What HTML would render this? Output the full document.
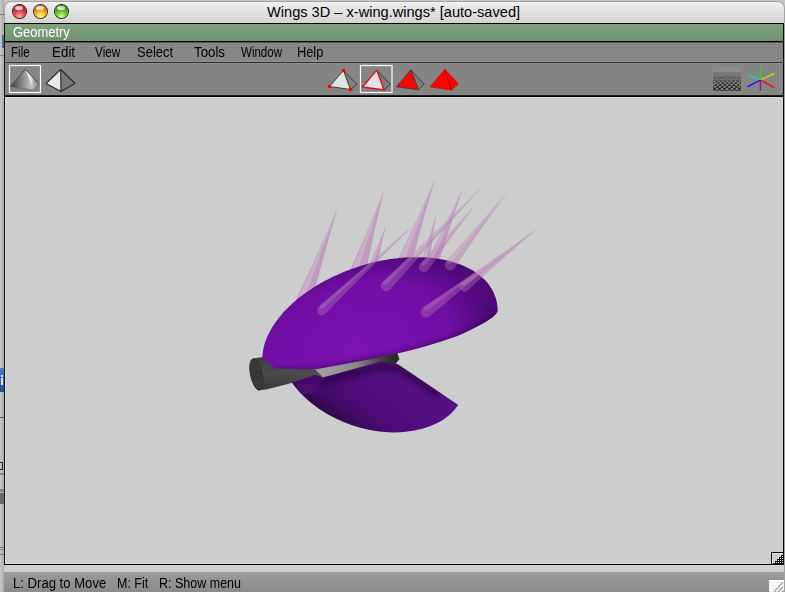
<!DOCTYPE html>
<html><head><meta charset="utf-8">
<style>
html,body{margin:0;padding:0;}
body{width:785px;height:592px;position:relative;overflow:hidden;background:#c4c4c4;font-family:"Liberation Sans",sans-serif;}
.a{position:absolute;}
#desk{left:0;top:0;width:785px;height:592px;background:linear-gradient(90deg,#c6c6c6,#bcbcbc 2px,#a8a8a8 4px,#c8c8c8 4px);}
#title{left:4px;top:1px;width:779px;height:22px;background:linear-gradient(#f0f0f0,#e6e6e6 30%,#d4d4d4);border-radius:7px 7px 0 0;border:1px solid #a4a4a4;border-bottom:none;box-sizing:border-box;width:781px;}
#ttext{left:267px;top:4px;white-space:nowrap;font-size:14.6px;color:#000;}
.tl{width:13px;height:13px;border-radius:50%;top:5px;}
.blk{background:#000;}
#gtext{left:13px;top:23.5px;font-size:14px;color:#fff;transform-origin:0 0;transform:scaleX(0.924);}
.mt{top:43.5px;font-size:14px;color:#000;transform-origin:0 0;}
.st{top:575px;font-size:14px;color:#000;transform-origin:0 0;}
svg{position:absolute;left:0;top:0;}
</style></head><body>
<div id="desk" class="a"></div>
<div id="title" class="a"></div>
<div id="ttext" class="a">Wings 3D – x-wing.wings* [auto-saved]</div>
<div class="a tl" style="left:12.5px;background:radial-gradient(circle at 50% 85%,#ffb0a8 0,#e05050 35%,#b82020 70%,#601010 100%);box-shadow:0 0 0 1px #3a0a0a;"></div>
<div class="a tl" style="left:33.5px;background:radial-gradient(circle at 50% 85%,#fff890 0,#f0c030 35%,#d07010 70%,#804000 100%);box-shadow:0 0 0 1px #4a2a08;"></div>
<div class="a tl" style="left:54.5px;background:radial-gradient(circle at 50% 85%,#d0ff90 0,#78c838 35%,#389818 70%,#1a5008 100%);box-shadow:0 0 0 1px #143808;"></div>
<div class="a" style="left:15px;top:6px;width:8px;height:4px;border-radius:50%;background:rgba(255,255,255,0.75);"></div>
<div class="a" style="left:36px;top:6px;width:8px;height:4px;border-radius:50%;background:rgba(255,255,255,0.75);"></div>
<div class="a" style="left:57px;top:6px;width:8px;height:4px;border-radius:50%;background:rgba(255,255,255,0.75);"></div>
<!-- frame -->
<div class="a blk" style="left:4px;top:23px;width:780px;height:1px;"></div>
<div class="a" style="left:5px;top:24px;width:778px;height:17px;background:linear-gradient(#7ea37e,#6f936f);"></div>
<div class="a blk" style="left:4px;top:24px;width:1px;height:540px;background:#111;"></div>
<div class="a blk" style="left:783px;top:24px;width:1px;height:541px;"></div>
<div class="a blk" style="left:4px;top:41px;width:780px;height:1px;"></div>
<div class="a" style="left:5px;top:42px;width:778px;height:1px;background:#555;"></div>
<div class="a" style="left:5px;top:43px;width:778px;height:18px;background:#878787;"></div>
<div class="a" style="left:5px;top:61px;width:778px;height:1px;background:#8f8f8f;"></div>
<div class="a" style="left:5px;top:62px;width:778px;height:1px;background:#333;"></div>
<div class="a" style="left:5px;top:63px;width:778px;height:1px;background:#8e8e8e;"></div>
<div class="a" style="left:5px;top:64px;width:778px;height:31px;background:#858585;"></div>
<div class="a" style="left:5px;top:95px;width:778px;height:1px;background:#1c1c1c;"></div>
<div class="a blk" style="left:5px;top:96px;width:778px;height:1px;"></div>
<div class="a" style="left:5px;top:97px;width:778px;height:467px;background:#cdcdcd;box-shadow:inset 1px 1px 0 #dcdcdc,inset -1px -1px 0 #dadada;"></div>
<div class="a blk" style="left:4px;top:564px;width:780px;height:1px;"></div>
<div class="a" style="left:4px;top:565px;width:780px;height:7px;background:#d0d0d0;"></div>
<div class="a" style="left:4px;top:572px;width:780px;height:20px;background:linear-gradient(#9c9c9c,#8a8a8a);"></div>
<!-- desktop left strip bits -->
<div class="a" style="left:0;top:14px;width:4px;height:1px;background:#777;"></div>
<div class="a" style="left:2px;top:35px;width:2px;height:13px;background:#4a6a9a;"></div>
<div class="a" style="left:0;top:55px;width:4px;height:1px;background:#888;"></div>
<div class="a" style="left:0;top:368px;width:4px;height:24px;background:linear-gradient(#4a80c0,#1a4a90);"></div>
<div class="a" style="left:1px;top:375px;width:2px;height:2px;background:#e0e8f0;"></div>
<div class="a" style="left:1px;top:378px;width:2px;height:7px;background:#e0e8f0;"></div>
<div class="a" style="left:0;top:417px;width:4px;height:1px;background:#555;"></div>
<div class="a" style="left:0;top:462px;width:2px;height:6px;border:1px solid #223;border-left:none;"></div>
<div class="a" style="left:0;top:473px;width:4px;height:2px;background:#888;"></div>
<div class="a" style="left:0;top:489px;width:4px;height:3px;background:#6a9a6a;"></div>
<div class="a" style="left:0;top:493px;width:4px;height:11px;background:#6a6a6a;"></div>
<div class="a" style="left:0;top:547px;width:4px;height:1px;background:#777;"></div>
<div class="a" style="left:0;top:549px;width:4px;height:1px;background:#888;"></div>
<div class="a" style="left:0;top:554px;width:4px;height:1px;background:#777;"></div>
<!-- resize box -->
<div class="a" style="left:771px;top:552px;width:12px;height:12px;background:#000;"></div>
<div class="a" style="left:772px;top:553px;width:11px;height:11px;background:#cdcdcd;box-shadow:inset 1px 1px 0 #e8e8e8;"></div>
<div class="a" style="left:784px;top:24px;width:1px;height:568px;background:#a0a0a0;"></div>
<!-- grip -->
<div class="a" style="left:769px;top:580px;width:15px;height:12px;background:repeating-linear-gradient(#ffffff 0,#ffffff 2px,#ececec 2px,#ececec 3px);"></div>
<div id="gtext" class="a">Geometry</div>
<div class="a mt" style="left:11px;transform:scaleX(0.832)">File</div>
<div class="a mt" style="left:52px;transform:scaleX(0.957)">Edit</div>
<div class="a mt" style="left:95px;transform:scaleX(0.842)">View</div>
<div class="a mt" style="left:137px;transform:scaleX(0.930)">Select</div>
<div class="a mt" style="left:194px;transform:scaleX(0.947)">Tools</div>
<div class="a mt" style="left:241px;transform:scaleX(0.823)">Window</div>
<div class="a mt" style="left:297px;transform:scaleX(0.911)">Help</div>
<div class="a st" style="left:13px;transform:scaleX(0.936)">L: Drag to Move</div>
<div class="a st" style="left:117px;transform:scaleX(0.89)">M: Fit</div>
<div class="a st" style="left:159px;transform:scaleX(0.893)">R: Show menu</div>
<svg width="785" height="592" viewBox="0 0 785 592">
<defs>
<linearGradient id="i1a" x1="10" y1="0" x2="33" y2="0" gradientUnits="userSpaceOnUse"><stop offset="0" stop-color="#3a3a3a"/><stop offset="0.55" stop-color="#8a8a8a"/><stop offset="1" stop-color="#d0d0d0"/></linearGradient>
<linearGradient id="i1b" x1="31" y1="0" x2="39" y2="0" gradientUnits="userSpaceOnUse"><stop offset="0" stop-color="#e8e8e8"/><stop offset="0.3" stop-color="#b0b0b0"/><stop offset="1" stop-color="#8a8a8a"/></linearGradient>
</defs>
<rect x="9.5" y="65.5" width="31" height="27" fill="none" stroke="#fff" stroke-width="1.2"/>
<path d="M25.4,69.2 L10.2,86.8 L33,90 Z" fill="url(#i1a)"/>
<path d="M25.4,69.2 L33,90 L38.9,84.1 Z" fill="url(#i1b)"/>
<path d="M10.2,86.8 L25.4,69.2 L38.9,84.1" fill="none" stroke="#404040" stroke-width="0.9"/>
<path d="M10.2,86.8 L33,90 L38.9,84.1" fill="none" stroke="#6a6a6a" stroke-width="0.7"/>
<path d="M60.7,69.5 L46,83.5 L61,91.5 Z" fill="#e8e8e8"/>
<path d="M60.7,69.5 L61,91.5 L75,83.5 Z" fill="#787878"/>
<path d="M60.7,69.5 L46,83.5 L61,91.5 L75,83.5 Z M60.7,69.5 L61,91.5" fill="none" stroke="#2a2a2a" stroke-width="1.1" stroke-linejoin="round"/>
<path d="M343.5,70.5 L329.5,86.5 L350.5,89.5 Z" fill="#e2e2e2"/>
<path d="M343.5,70.5 L350.5,89.5 L357,84.5 Z" fill="#808080"/>
<path d="M343.5,70.5 L329.5,86.5 L350.5,89.5 L357,84.5 Z M343.5,70.5 L350.5,89.5" fill="none" stroke="#333" stroke-width="0.9" stroke-linejoin="round"/>
<rect x="341.9" y="68.9" width="3.2" height="3.2" fill="#ff0000"/>
<rect x="327.9" y="84.9" width="3.2" height="3.2" fill="#ff0000"/>
<rect x="348.9" y="87.9" width="3.2" height="3.2" fill="#ff0000"/>
<rect x="360.5" y="65.5" width="31.5" height="27" fill="none" stroke="#fff" stroke-width="1.2"/>
<path d="M376.8,70.2 L362.5,87 L384,90 Z" fill="#e2e2e2"/>
<path d="M376.8,70.2 L384,90 L390.5,84.5 Z" fill="#7c7c7c"/>
<path d="M376.8,70.2 L390.5,84.5 L384,90" fill="none" stroke="#333" stroke-width="0.9" stroke-linejoin="round"/>
<path d="M376.8,70.2 L362.5,87 L384,90 Z" fill="none" stroke="#e01010" stroke-width="1.3" stroke-linejoin="round"/>
<path d="M410.8,69.8 L396.5,86.8 L418.5,89.8 Z" fill="#ff0000"/>
<path d="M410.8,69.8 L418.5,89.8 L424.2,84.2 Z" fill="#7c7c7c"/>
<path d="M410.8,69.8 L396.5,86.8 L418.5,89.8 L424.2,84.2 Z M410.8,69.8 L418.5,89.8" fill="none" stroke="#3a3a3a" stroke-width="0.9" stroke-linejoin="round"/>
<path d="M444.8,69.2 L430,87 L451.5,90 L458.5,84 Z" fill="#ff0000" stroke="#c00" stroke-width="0.6"/>
<path d="M444.8,69.2 L451.5,90" stroke="#b00000" stroke-width="0.9"/>
<clipPath id="cg"><rect x="713" y="67" width="28" height="24"/></clipPath>
<rect x="713" y="67" width="28" height="24" fill="#8c8c8c"/>
<g clip-path="url(#cg)"><path d="M646.35,97.75 L704.42,72.56 L704.08,71.79 L645.87,96.65Z M646.65,97.47 L659.13,72.37 L658.37,71.98 L645.58,96.93Z M652.14,97.75 L707.67,72.56 L707.33,71.79 L651.64,96.65Z M652.45,97.42 L662.39,72.33 L661.61,72.02 L651.33,96.98Z M657.92,97.74 L710.93,72.56 L710.57,71.79 L657.41,96.66Z M658.24,97.37 L665.65,72.30 L664.85,72.05 L657.09,97.03Z M663.71,97.74 L714.19,72.55 L713.81,71.80 L663.18,96.66Z M664.03,97.32 L668.91,72.26 L668.09,72.09 L662.86,97.08Z M669.50,97.73 L717.44,72.55 L717.06,71.80 L668.94,96.67Z M669.82,97.26 L672.17,72.22 L671.33,72.13 L668.63,97.14Z M675.29,97.73 L720.70,72.54 L720.30,71.81 L674.71,96.67Z M675.60,97.20 L675.42,72.18 L674.58,72.18 L674.40,97.20Z M681.08,97.72 L723.96,72.54 L723.54,71.81 L680.48,96.68Z M681.37,97.14 L678.67,72.13 L677.83,72.22 L680.18,97.26Z M686.87,97.71 L727.22,72.53 L726.78,71.82 L686.24,96.69Z M687.14,97.08 L681.91,72.09 L681.09,72.26 L685.97,97.32Z M692.66,97.70 L730.48,72.53 L730.02,71.82 L692.00,96.70Z M692.91,97.03 L685.15,72.05 L684.35,72.30 L691.76,97.37Z M698.46,97.69 L733.74,72.52 L733.26,71.83 L697.76,96.71Z M698.67,96.98 L688.39,72.02 L687.61,72.33 L697.55,97.42Z M704.25,97.68 L737.01,72.51 L736.49,71.84 L703.53,96.72Z M704.42,96.93 L691.63,71.98 L690.87,72.37 L703.35,97.47Z M710.05,97.66 L740.27,72.50 L739.73,71.85 L709.28,96.74Z M710.18,96.89 L694.86,71.96 L694.14,72.39 L709.15,97.51Z M715.85,97.65 L743.53,72.49 L742.97,71.86 L715.04,96.75Z M715.93,96.85 L698.09,71.93 L697.41,72.42 L714.95,97.55Z M721.64,97.63 L746.80,72.47 L746.20,71.88 L720.80,96.77Z M721.69,96.82 L701.33,71.91 L700.67,72.44 L720.76,97.58Z M727.44,97.60 L750.06,72.46 L749.44,71.89 L726.56,96.80Z M727.44,96.80 L704.56,71.89 L703.94,72.46 L726.56,97.60Z M733.24,97.58 L753.33,72.44 L752.67,71.91 L732.31,96.82Z M733.20,96.77 L707.80,71.88 L707.20,72.47 L732.36,97.63Z M739.05,97.55 L756.59,72.42 L755.91,71.93 L738.07,96.85Z M738.96,96.75 L711.03,71.86 L710.47,72.49 L738.15,97.65Z M744.85,97.51 L759.86,72.39 L759.14,71.96 L743.82,96.89Z M744.72,96.74 L714.27,71.85 L713.73,72.50 L743.95,97.66Z M750.65,97.47 L763.13,72.37 L762.37,71.98 L749.58,96.93Z M750.47,96.72 L717.51,71.84 L716.99,72.51 L749.75,97.68Z M756.45,97.42 L766.39,72.33 L765.61,72.02 L755.33,96.98Z M756.24,96.71 L720.74,71.83 L720.26,72.52 L755.54,97.69Z M762.24,97.37 L769.65,72.30 L768.85,72.05 L761.09,97.03Z M762.00,96.70 L723.98,71.82 L723.52,72.53 L761.34,97.70Z M768.03,97.32 L772.91,72.26 L772.09,72.09 L766.86,97.08Z M767.76,96.69 L727.22,71.82 L726.78,72.53 L767.13,97.71Z M773.82,97.26 L776.17,72.22 L775.33,72.13 L772.63,97.14Z M773.52,96.68 L730.46,71.81 L730.04,72.54 L772.92,97.72Z M779.60,97.20 L779.42,72.18 L778.58,72.18 L778.40,97.20Z M779.29,96.67 L733.70,71.81 L733.30,72.54 L778.71,97.73Z M785.37,97.14 L782.67,72.13 L781.83,72.22 L784.18,97.26Z M785.06,96.67 L736.94,71.80 L736.56,72.55 L784.50,97.73Z M791.14,97.08 L785.91,72.09 L785.09,72.26 L789.97,97.32Z M790.82,96.66 L740.19,71.80 L739.81,72.55 L790.29,97.74Z M796.91,97.03 L789.15,72.05 L788.35,72.30 L795.76,97.37Z M796.59,96.66 L743.43,71.79 L743.07,72.56 L796.08,97.74Z M802.67,96.98 L792.39,72.02 L791.61,72.33 L801.55,97.42Z M802.36,96.65 L746.67,71.79 L746.33,72.56 L801.86,97.75Z M808.42,96.93 L795.63,71.98 L794.87,72.37 L807.35,97.47Z M808.13,96.65 L749.92,71.79 L749.58,72.56 L807.65,97.75Z" fill="#262626"/>
<defs><linearGradient id="gfade" x1="0" y1="67" x2="0" y2="91" gradientUnits="userSpaceOnUse"><stop offset="0" stop-color="#8c8c8c" stop-opacity="1"/><stop offset="0.3" stop-color="#8c8c8c" stop-opacity="0.7"/><stop offset="0.6" stop-color="#8c8c8c" stop-opacity="0.3"/><stop offset="0.9" stop-color="#8c8c8c" stop-opacity="0"/></linearGradient></defs>
<rect x="713" y="67" width="28" height="24" fill="url(#gfade)"/></g>
<line x1="760.4" y1="80.0" x2="747.4" y2="74.4" stroke="#20c8c8" stroke-width="1.4"/>
<line x1="760.4" y1="80.0" x2="774.4" y2="73.5" stroke="#d8c810" stroke-width="1.4"/>
<line x1="760.4" y1="80.0" x2="760.4" y2="90.6" stroke="#8a1a8a" stroke-width="1.4"/>
<line x1="760.4" y1="80.0" x2="747.4" y2="86.8" stroke="#1010f0" stroke-width="1.4"/>
<line x1="760.4" y1="80.0" x2="774.4" y2="87.6" stroke="#f01010" stroke-width="1.4"/>
<line x1="760.4" y1="80.0" x2="760.4" y2="67.0" stroke="#20e020" stroke-width="1.4"/>
<defs><pattern id="chk" x="0" y="0" width="2" height="2" patternUnits="userSpaceOnUse"><rect width="2" height="2" fill="#000"/><rect width="1" height="1" fill="#fff"/></pattern></defs>
<path d="M783,553 L783,564 L772,564 Z" fill="url(#chk)"/>
<path d="M772,564 L783,553" stroke="#e8e8e8" stroke-width="0.8"/>
<g stroke="#8a8a8a" stroke-width="1.1"><line x1="774" y1="592" x2="783" y2="582"/><line x1="778" y1="592" x2="783" y2="586.5"/><line x1="782" y1="592" x2="783.5" y2="590.5"/></g>
<defs>
<radialGradient id="gU" cx="0" cy="0" r="128" gradientUnits="userSpaceOnUse" gradientTransform="translate(355,348) rotate(-18) scale(1.08,0.7)"><stop offset="0" stop-color="#7c12b2"/><stop offset="0.7" stop-color="#700ea4"/><stop offset="1" stop-color="#4e0878"/></radialGradient>
<linearGradient id="gL" x1="405" y1="385" x2="365" y2="438" gradientUnits="userSpaceOnUse"><stop offset="0" stop-color="#561082"/><stop offset="0.55" stop-color="#4e0c78"/><stop offset="0.85" stop-color="#420a66"/><stop offset="1" stop-color="#34084e"/></linearGradient>
<linearGradient id="gS" x1="315" y1="372" x2="397" y2="358" gradientUnits="userSpaceOnUse"><stop offset="0" stop-color="#a4a4a4"/><stop offset="0.5" stop-color="#8a8a8a"/><stop offset="0.78" stop-color="#484848"/><stop offset="1" stop-color="#222"/></linearGradient>
<linearGradient id="gR" x1="0" y1="357" x2="0" y2="390" gradientUnits="userSpaceOnUse"><stop offset="0" stop-color="#3c3c3c"/><stop offset="0.5" stop-color="#4c4c4c"/><stop offset="1" stop-color="#383838"/></linearGradient>
<clipPath id="cL"><path d="M270,386 L289,378 L322,372 L381,356 L398.6,364.8 L487.7,424.8 L487,470 L270,470 Z"/></clipPath>
</defs>
<path d="M338.0,207.0 Q322.4,259.8 311.3,303.7 A7.8,7.8 0 0 1 296.7,298.3 Q316.2,257.6 338.0,207.0Z" fill="#b070b0" fill-opacity="0.50"/>
<path d="M338.0,207.0 Q316.7,257.7 297.8,298.7 L303.3,300.7 Z" fill="#ffffff" fill-opacity="0.18"/>
<path d="M384.0,190.0 Q372.9,236.1 365.6,274.4 A8.0,8.0 0 0 1 350.4,269.6 Q366.5,234.1 384.0,190.0Z" fill="#b070b0" fill-opacity="0.50"/>
<path d="M384.0,190.0 Q367.0,234.2 351.5,269.9 L357.2,271.8 Z" fill="#ffffff" fill-opacity="0.18"/>
<path d="M386.0,225.0 Q380.5,248.1 376.8,267.2 A4.0,4.0 0 0 1 369.2,264.8 Q377.2,247.0 386.0,225.0Z" fill="#b070b0" fill-opacity="0.50"/>
<path d="M386.0,225.0 Q377.5,247.1 369.8,265.0 L372.6,265.9 Z" fill="#ffffff" fill-opacity="0.18"/>
<path d="M435.0,179.0 Q420.9,226.8 411.0,266.6 A7.5,7.5 0 0 1 397.0,261.4 Q415.0,224.7 435.0,179.0Z" fill="#b070b0" fill-opacity="0.50"/>
<path d="M435.0,179.0 Q415.4,224.8 398.0,261.8 L403.3,263.7 Z" fill="#ffffff" fill-opacity="0.18"/>
<path d="M463.0,188.0 Q448.3,230.8 437.6,266.3 A6.0,6.0 0 0 1 426.4,261.7 Q443.6,228.8 463.0,188.0Z" fill="#b070b0" fill-opacity="0.50"/>
<path d="M463.0,188.0 Q443.9,229.0 427.3,262.1 L431.4,263.8 Z" fill="#ffffff" fill-opacity="0.18"/>
<path d="M436.0,214.0 Q432.1,239.7 429.9,260.8 A4.0,4.0 0 0 1 422.1,259.2 Q428.9,238.9 436.0,214.0Z" fill="#b070b0" fill-opacity="0.50"/>
<path d="M436.0,214.0 Q429.1,239.0 422.7,259.3 L425.6,259.9 Z" fill="#ffffff" fill-opacity="0.18"/>
<clipPath id="cE"><ellipse cx="0" cy="0" rx="95.8" ry="65.4" transform="translate(373,363.3) rotate(18.7)"/></clipPath>
<filter id="bl2" x="-20%" y="-50%" width="140%" height="200%"><feGaussianBlur stdDeviation="3"/></filter>
<g clip-path="url(#cL)"><g clip-path="url(#cE)"><rect x="270" y="350" width="220" height="100" fill="url(#gL)"/><path d="M322,381 L381,366 L400,368 L440,395" fill="none" stroke="#1a0030" stroke-opacity="0.6" stroke-width="8" filter="url(#bl2)"/><ellipse cx="302" cy="389" rx="16" ry="6" fill="#6a18a8" fill-opacity="0.3" filter="url(#bl2)"/></g></g>
<path d="M381,356 L397,352 L399.5,359 L395,364.5 L381,362 Z" fill="#303030"/>
<path d="M312,366 L397,350 L396,362 L381,361.5 L322.7,377.6 Z" fill="url(#gS)"/>
<path d="M262.4,357.0 L262.6,354.0 L263.0,351.1 L263.6,348.1 L264.3,345.1 L265.2,342.1 L266.3,339.1 L267.6,336.0 L269.1,333.0 L270.7,330.0 L272.4,327.0 L274.4,323.9 L276.5,320.9 L278.7,318.0 L281.2,315.0 L283.7,312.1 L286.4,309.2 L289.3,306.4 L292.3,303.6 L295.4,300.8 L298.6,298.1 L302.0,295.5 L305.5,292.9 L309.1,290.4 L312.8,287.9 L316.6,285.6 L320.5,283.3 L324.5,281.0 L328.6,278.9 L332.8,276.8 L337.0,274.9 L341.3,273.0 L345.6,271.2 L350.1,269.5 L354.5,267.9 L359.0,266.4 L363.5,265.0 L368.1,263.8 L372.6,262.6 L377.2,261.5 L381.8,260.6 L386.4,259.8 L390.9,259.0 L395.5,258.4 L400.0,257.9 L404.5,257.6 L409.0,257.3 L413.4,257.2 L417.8,257.2 L422.1,257.3 L426.3,257.5 L430.5,257.8 L434.6,258.3 L438.6,258.8 L442.6,259.5 L446.4,260.3 L450.1,261.2 L453.7,262.2 L457.3,263.4 L460.7,264.6 L463.9,266.0 L467.1,267.4 L470.1,269.0 L473.0,270.6 L475.7,272.4 L478.3,274.2 L480.7,276.2 L483.0,278.2 L485.2,280.3 L487.1,282.5 L489.0,284.8 L490.6,287.2 L492.1,289.6 L493.4,292.1 L494.5,294.7 L495.5,297.3 L496.3,300.0 L496.9,302.7 L497.3,305.5 L497.6,308.3 L497.7,311.2 L497.4,311.4 L497.1,312.0 L496.8,312.6 L496.3,313.4 L495.8,314.2 L495.0,315.0 L494.1,315.8 L493.2,316.7 L492.1,317.6 L490.8,318.5 L489.2,319.6 L487.3,320.8 L485.0,322.2 L482.4,323.7 L479.5,325.3 L476.4,327.0 L473.2,328.6 L470.0,330.2 L467.0,331.6 L464.2,333.0 L461.3,334.3 L457.9,335.7 L453.7,337.3 L448.3,339.1 L441.8,341.2 L434.5,343.5 L426.4,345.9 L417.5,348.5 L407.7,351.1 L397.1,353.6 L384.7,356.3 L370.4,359.2 L355.3,362.1 L340.4,364.8 L326.8,367.3 L315.5,369.2 L306.7,370.6 L299.5,371.7 L293.6,372.4 L288.6,372.8 L284.2,373.0 L280.0,373.0 L276.2,372.7 L273.0,372.2 L270.5,371.4 L268.4,370.4 L266.6,369.3 L265.0,368.0 L263.8,366.4 L263.0,364.4 L262.6,362.2 L262.3,360.1 L262.2,358.3 L262.0,357.0Z" fill="url(#gU)"/>
<clipPath id="cU"><path d="M262.4,357.0 L262.6,354.0 L263.0,351.1 L263.6,348.1 L264.3,345.1 L265.2,342.1 L266.3,339.1 L267.6,336.0 L269.1,333.0 L270.7,330.0 L272.4,327.0 L274.4,323.9 L276.5,320.9 L278.7,318.0 L281.2,315.0 L283.7,312.1 L286.4,309.2 L289.3,306.4 L292.3,303.6 L295.4,300.8 L298.6,298.1 L302.0,295.5 L305.5,292.9 L309.1,290.4 L312.8,287.9 L316.6,285.6 L320.5,283.3 L324.5,281.0 L328.6,278.9 L332.8,276.8 L337.0,274.9 L341.3,273.0 L345.6,271.2 L350.1,269.5 L354.5,267.9 L359.0,266.4 L363.5,265.0 L368.1,263.8 L372.6,262.6 L377.2,261.5 L381.8,260.6 L386.4,259.8 L390.9,259.0 L395.5,258.4 L400.0,257.9 L404.5,257.6 L409.0,257.3 L413.4,257.2 L417.8,257.2 L422.1,257.3 L426.3,257.5 L430.5,257.8 L434.6,258.3 L438.6,258.8 L442.6,259.5 L446.4,260.3 L450.1,261.2 L453.7,262.2 L457.3,263.4 L460.7,264.6 L463.9,266.0 L467.1,267.4 L470.1,269.0 L473.0,270.6 L475.7,272.4 L478.3,274.2 L480.7,276.2 L483.0,278.2 L485.2,280.3 L487.1,282.5 L489.0,284.8 L490.6,287.2 L492.1,289.6 L493.4,292.1 L494.5,294.7 L495.5,297.3 L496.3,300.0 L496.9,302.7 L497.3,305.5 L497.6,308.3 L497.7,311.2 L497.4,311.4 L497.1,312.0 L496.8,312.6 L496.3,313.4 L495.8,314.2 L495.0,315.0 L494.1,315.8 L493.2,316.7 L492.1,317.6 L490.8,318.5 L489.2,319.6 L487.3,320.8 L485.0,322.2 L482.4,323.7 L479.5,325.3 L476.4,327.0 L473.2,328.6 L470.0,330.2 L467.0,331.6 L464.2,333.0 L461.3,334.3 L457.9,335.7 L453.7,337.3 L448.3,339.1 L441.8,341.2 L434.5,343.5 L426.4,345.9 L417.5,348.5 L407.7,351.1 L397.1,353.6 L384.7,356.3 L370.4,359.2 L355.3,362.1 L340.4,364.8 L326.8,367.3 L315.5,369.2 L306.7,370.6 L299.5,371.7 L293.6,372.4 L288.6,372.8 L284.2,373.0 L280.0,373.0 L276.2,372.7 L273.0,372.2 L270.5,371.4 L268.4,370.4 L266.6,369.3 L265.0,368.0 L263.8,366.4 L263.0,364.4 L262.6,362.2 L262.3,360.1 L262.2,358.3 L262.0,357.0Z"/></clipPath>
<filter id="bl" x="-20%" y="-20%" width="140%" height="140%"><feGaussianBlur stdDeviation="2.5"/></filter>
<g clip-path="url(#cU)"><path d="M270,372 L315.5,371 L397.1,356 L448.3,341 L470,332 L487.3,323 L498,313" fill="none" stroke="#200030" stroke-opacity="0.45" stroke-width="7" filter="url(#bl)"/></g>
<path d="M252,359.5 Q253,358.2 256,358 L262.3,357.2 L274.4,368.3 L315.5,369.4 L322.7,377.6 L315,375 L288.8,383.7 L266,389.5 L258.4,390.3 Q256,389 254.5,386 Z" fill="url(#gR)"/>
<g transform="translate(256.4,374.5) rotate(-12)"><ellipse cx="0" cy="0" rx="5.9" ry="16.1" fill="#393939" stroke="#2c2c2c" stroke-width="0.8"/><rect x="-0.6" y="-3.2" width="3.8" height="7.4" rx="1.6" fill="#2a2a2a"/><rect x="0.4" y="-1.8" width="1.8" height="4.4" rx="0.9" fill="#4a4a4a"/></g>
<path d="M418.0,221.0 Q366.6,271.5 325.4,313.7 A5.0,5.0 0 0 1 318.6,306.3 Q363.8,268.4 418.0,221.0Z" fill="#b070b0" fill-opacity="0.42"/>
<path d="M418.0,221.0 Q364.0,268.6 319.1,306.9 L321.7,309.6 Z" fill="#ffffff" fill-opacity="0.12"/>
<path d="M484.0,185.0 Q431.8,242.2 389.9,289.8 A5.5,5.5 0 0 1 382.1,282.2 Q428.4,238.9 484.0,185.0Z" fill="#b070b0" fill-opacity="0.42"/>
<path d="M484.0,185.0 Q428.7,239.2 382.6,282.7 L385.6,285.6 Z" fill="#ffffff" fill-opacity="0.12"/>
<path d="M477.0,203.0 Q449.5,239.5 427.9,270.2 A5.0,5.0 0 0 1 420.1,263.8 Q446.2,236.9 477.0,203.0Z" fill="#b070b0" fill-opacity="0.42"/>
<path d="M477.0,203.0 Q446.5,237.1 420.7,264.3 L423.6,266.7 Z" fill="#ffffff" fill-opacity="0.12"/>
<path d="M508.0,191.0 Q477.9,233.1 454.3,268.4 A5.5,5.5 0 0 1 445.7,261.6 Q474.3,230.3 508.0,191.0Z" fill="#b070b0" fill-opacity="0.42"/>
<path d="M508.0,191.0 Q474.5,230.5 446.3,262.1 L449.6,264.7 Z" fill="#ffffff" fill-opacity="0.12"/>
<path d="M538.0,228.0 Q477.8,276.0 429.3,316.4 A5.5,5.5 0 0 1 422.7,307.6 Q475.0,272.4 538.0,228.0Z" fill="#b070b0" fill-opacity="0.42"/>
<path d="M538.0,228.0 Q475.2,272.6 423.2,308.3 L425.7,311.6 Z" fill="#ffffff" fill-opacity="0.12"/>
<path d="M536.0,230.0 Q497.7,263.0 467.1,290.9 A5.0,5.0 0 0 1 460.9,283.1 Q495.1,259.7 536.0,230.0Z" fill="#b070b0" fill-opacity="0.42"/>
<path d="M536.0,230.0 Q495.3,259.9 461.4,283.7 L463.7,286.6 Z" fill="#ffffff" fill-opacity="0.12"/>
</svg>
</body></html>
